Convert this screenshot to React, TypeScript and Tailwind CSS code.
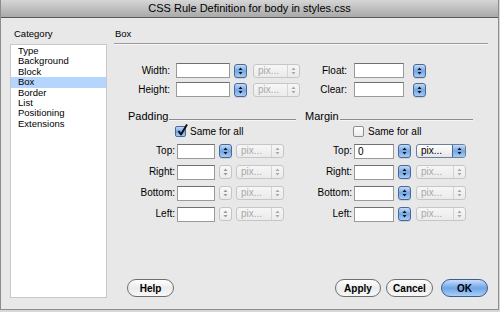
import React from "react";

const font = { fontFamily: '"Liberation Sans", Arial, sans-serif' };

function Arrows({ color }: { color: string }) {
  return (
    <svg width="5" height="8" viewBox="0 0 5 8">
      <polygon points="2.5,0.5 0.5,3 4.5,3" fill={color} />
      <polygon points="2.5,7.5 0.5,5 4.5,5" fill={color} />
    </svg>
  );
}

function Stepper({ enabled }: { enabled: boolean }) {
  return enabled ? (
    <div className="w-[13px] h-[14px] rounded-[3px] border border-[#48689a] bg-linear-to-b from-[#c4dbf6] via-[#74a7e6] to-[#a4ccf4] flex items-center justify-center shadow-[0_1px_0_rgba(0,0,0,0.1)]">
      <Arrows color="#111" />
    </div>
  ) : (
    <div className="w-[13px] h-[14px] rounded-[3px] border border-[#c4c4c4] bg-linear-to-b from-[#f8f8f8] to-[#ececec] flex items-center justify-center">
      <Arrows color="#9a9a9a" />
    </div>
  );
}

function Select({ w, enabled }: { w: number; enabled: boolean }) {
  return enabled ? (
    <div
      className="h-[14px] rounded-[3px] border border-[#6a7e9e] bg-linear-to-b from-[#ffffff] to-[#e6e6e6] flex items-stretch overflow-hidden"
      style={{ width: w }}
    >
      <div className="flex-1 pl-[4px] text-[10px] leading-[12px] text-black">pix...</div>
      <div className="w-[13px] bg-linear-to-b from-[#c4dbf6] via-[#74a7e6] to-[#a4ccf4] border-l border-[#48689a] flex items-center justify-center">
        <Arrows color="#111" />
      </div>
    </div>
  ) : (
    <div
      className="h-[14px] rounded-[3px] border border-[#c6c6c6] bg-linear-to-b from-[#f6f6f6] to-[#ebebeb] flex items-stretch"
      style={{ width: w }}
    >
      <div className="flex-1 pl-[4px] text-[10px] leading-[12px] text-[#a8a8a8]">pix...</div>
      <div className="w-[12px] border-l border-[#d4d4d4] flex items-center justify-center">
        <Arrows color="#a8a8a8" />
      </div>
    </div>
  );
}

function Input({ w, value }: { w: number; value?: string }) {
  return (
    <div
      className="h-[15px] bg-white border border-[#9a9a9a] border-t-[#707070] text-[10px] leading-[13px] pl-[3px] text-black"
      style={{ width: w }}
    >
      {value}
    </div>
  );
}

function Label({ w, text }: { w: number; text: string }) {
  return (
    <div className="text-right text-[10px] leading-[12px] text-black shrink-0" style={{ width: w }}>
      {text}
    </div>
  );
}

function Checkbox({ checked }: { checked: boolean }) {
  return checked ? (
    <div className="relative w-[11px] h-[11px] rounded-[2px] border border-[#48689a] bg-linear-to-b from-[#c4dbf6] via-[#74a7e6] to-[#a4ccf4]">
      <svg className="absolute left-[0px] top-[-4px]" width="13" height="14" viewBox="0 0 13 14">
        <path d="M2.5 8 L5 11.5 L11 1.5" stroke="#111" strokeWidth="2" fill="none" strokeLinejoin="round" />
      </svg>
    </div>
  ) : (
    <div className="w-[11px] h-[11px] rounded-[2px] border border-[#8e8e8e] bg-linear-to-b from-[#ffffff] to-[#ececec]" />
  );
}

function Button({ text, w, primary }: { text: string; w: number; primary?: boolean }) {
  return (
    <div
      className={
        "h-[18px] rounded-full flex items-center justify-center text-[10px] font-bold text-black " +
        (primary
          ? "border border-[#3c5c8e] bg-linear-to-b from-[#c8def8] via-[#6fa4e8] to-[#a8d0f6]"
          : "border border-[#6e6e6e] bg-linear-to-b from-[#ffffff] via-[#ececec] to-[#f8f8f8]")
      }
      style={{ width: w }}
    >
      {text}
    </div>
  );
}

function PadRow({ label, enabledStep }: { label: string; enabledStep: boolean }) {
  return (
    <div className="flex items-center h-[14px]">
      <Label w={47} text={label} />
      <div className="ml-[2px]">
        <Input w={38} />
      </div>
      <div className="ml-[4px]">
        <Stepper enabled={enabledStep} />
      </div>
      <div className="ml-[4px]">
        <Select w={48} enabled={false} />
      </div>
    </div>
  );
}

function MarRow({ label, value, enabledSelect }: { label: string; value?: string; enabledSelect: boolean }) {
  return (
    <div className="flex items-center h-[14px]">
      <Label w={47} text={label} />
      <div className="ml-[2px]">
        <Input w={40} value={value} />
      </div>
      <div className="ml-[4px]">
        <Stepper enabled={true} />
      </div>
      <div className="ml-[5px]">
        <Select w={50} enabled={enabledSelect} />
      </div>
    </div>
  );
}

const categories = ["Type", "Background", "Block", "Box", "Border", "List", "Positioning", "Extensions"];

export default function App() {
  return (
    <div className="w-[500px] h-[312px] bg-[#d8d8d8] overflow-hidden" style={font}>
      <div className="w-[499px] h-[310px] bg-[#e8e8e8] border-r border-b border-l border-[#8c8c8c] flex flex-col">
        <div className="h-[18px] shrink-0 bg-linear-to-b from-[#d6d6d6] to-[#a9a9a9] border-b border-[#5a5a5a] flex items-center justify-center text-[11px] leading-[13px] text-black">
          CSS Rule Definition for body in styles.css
        </div>
        <div className="flex flex-1">
          {/* left column */}
          <div className="ml-[9px] w-[97px] flex flex-col">
            <div className="pl-[4px] mt-[10px] h-[12px] text-[9.5px] leading-[12px] text-black">Category</div>
            <div className="mt-[4px] h-[254px] bg-white border border-[#c8c8c8] pt-[1px]">
              {categories.map((c) => (
                <div
                  key={c}
                  className={
                    "h-[10.4px] pl-[7px] text-[9.5px] leading-[10.4px] text-black " +
                    (c === "Box" ? "bg-[#b5d5fe]" : "")
                  }
                >
                  {c}
                </div>
              ))}
            </div>
          </div>
          {/* right column */}
          <div className="ml-[7px] w-[374px] flex flex-col">
            <div className="mt-[10px] h-[12px] pl-[1px] text-[9.5px] leading-[12px] text-black">Box</div>
            <div className="mt-[3px] h-[2px] border-t border-[#9c9c9c] border-b border-b-[#f6f6f6]" />

            {/* width / height */}
            <div className="mt-[18px] flex flex-col gap-[4px]">
              {[
                ["Width:", "Float:"],
                ["Height:", "Clear:"],
              ].map(([a, b]) => (
                <div key={a} className="flex items-center h-[15px]">
                  <Label w={56} text={a} />
                  <div className="ml-[6px]">
                    <Input w={54} />
                  </div>
                  <div className="ml-[4px]">
                    <Stepper enabled={true} />
                  </div>
                  <div className="ml-[6px]">
                    <Select w={47} enabled={false} />
                  </div>
                  <Label w={47} text={b} />
                  <div className="ml-[7px]">
                    <Input w={50} />
                  </div>
                  <div className="ml-[9px]">
                    <Stepper enabled={true} />
                  </div>
                </div>
              ))}
            </div>

            {/* padding / margin */}
            <div className="mt-[13px] flex">
              <div className="ml-[14px] w-[168px] flex flex-col">
                <div className="flex items-end h-[13px]">
                  <div className="text-[11px] leading-[13px] text-black">Padding</div>
                  <div className="flex-1 h-[2px] mb-[2px] ml-[1px] border-t border-[#8c8c8c] border-b border-b-[#f6f6f6]" />
                </div>
                <div className="mt-[2px] h-[13px] flex items-center ml-[47px]">
                  <Checkbox checked={true} />
                  <div className="ml-[4px] text-[10px] leading-[12px] text-black">Same for all</div>
                </div>
                <div className="mt-[6px] flex flex-col gap-[7px]">
                  <PadRow label="Top:" enabledStep={true} />
                  <PadRow label="Right:" enabledStep={false} />
                  <PadRow label="Bottom:" enabledStep={false} />
                  <PadRow label="Left:" enabledStep={false} />
                </div>
              </div>
              <div className="ml-[9px] w-[168px] flex flex-col">
                <div className="flex items-end h-[13px]">
                  <div className="text-[11px] leading-[13px] text-black">Margin</div>
                  <div className="flex-1 h-[2px] mb-[2px] ml-[1px] border-t border-[#8c8c8c] border-b border-b-[#f6f6f6]" />
                </div>
                <div className="mt-[2px] h-[13px] flex items-center ml-[48px]">
                  <Checkbox checked={false} />
                  <div className="ml-[4px] text-[10px] leading-[12px] text-black">Same for all</div>
                </div>
                <div className="mt-[6px] flex flex-col gap-[7px]">
                  <MarRow label="Top:" value="0" enabledSelect={true} />
                  <MarRow label="Right:" enabledSelect={false} />
                  <MarRow label="Bottom:" enabledSelect={false} />
                  <MarRow label="Left:" enabledSelect={false} />
                </div>
              </div>
            </div>

            {/* buttons */}
            <div className="mt-auto mb-[12px] flex items-center">
              <div className="ml-[13px]">
                <Button text="Help" w={47} />
              </div>
              <div className="ml-auto flex gap-[5px] items-center">
                <Button text="Apply" w={46} />
                <Button text="Cancel" w={47} />
                <div className="ml-[3px]">
                  <Button text="OK" w={47} primary />
                </div>
              </div>
            </div>
          </div>
        </div>
      </div>
    </div>
  );
}
